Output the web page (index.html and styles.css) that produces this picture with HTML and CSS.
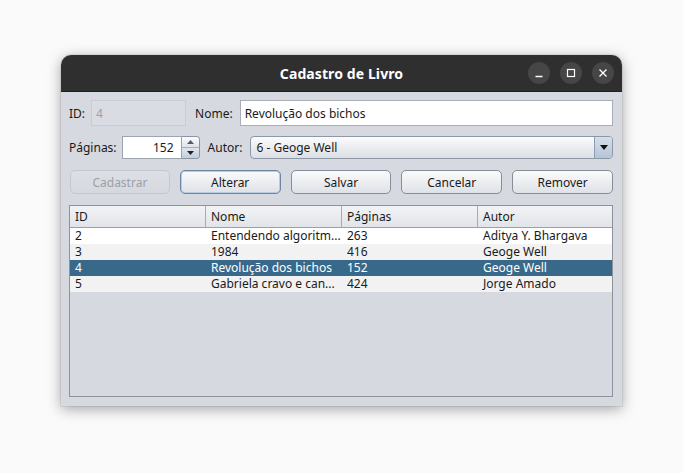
FILE: index.html
```html
<!DOCTYPE html>
<html lang="pt">
<head>
<meta charset="utf-8">
<title>Cadastro de Livro</title>
<link rel="stylesheet" href="styles.css">
</head>
<body>
<div class="window">
  <div class="titlebar">
    <div class="title">Cadastro de Livro</div>
    <div class="controls">
      <span class="ctl"><svg width="10" height="10" viewBox="0 0 10 10"><path d="M1.5 8.5h7" stroke="#fff" stroke-width="1.3"/></svg></span>
      <span class="ctl"><svg width="10" height="10" viewBox="0 0 10 10"><rect x="1.5" y="1.5" width="7" height="7" fill="none" stroke="#fff" stroke-width="1.2"/></svg></span>
      <span class="ctl"><svg width="10" height="10" viewBox="0 0 10 10"><path d="M1.5 1.5l7 7M8.5 1.5l-7 7" stroke="#fff" stroke-width="1.3"/></svg></span>
    </div>
  </div>
  <div class="content">
    <div class="row row1">
      <span class="lbl">ID:</span>
      <div class="field field-id">4</div>
      <span class="lbl lbl-nome">Nome:</span>
      <div class="field field-nome">Revolução dos bichos</div>
    </div>
    <div class="row row2">
      <span class="lbl">Páginas:</span>
      <div class="spinner">
        <div class="field field-pag">152</div>
        <div class="spin-btns">
          <span class="spin up"><svg width="7" height="4" viewBox="0 0 7 4"><path d="M0 4L3.5 0L7 4z" fill="#555b66"/></svg></span>
          <span class="spin down"><svg width="7" height="4" viewBox="0 0 7 4"><path d="M0 0L3.5 4L7 0z" fill="#222"/></svg></span>
        </div>
      </div>
      <span class="lbl lbl-autor">Autor:</span>
      <div class="combo">
        <span class="combo-text">6 - Geoge Well</span>
        <span class="combo-arrow"><svg width="8" height="5" viewBox="0 0 8 5"><path d="M0 0L4 5L8 0z" fill="#111"/></svg></span>
      </div>
    </div>
    <div class="row buttons">
      <button class="btn disabled">Cadastrar</button>
      <button class="btn focused">Alterar</button>
      <button class="btn">Salvar</button>
      <button class="btn">Cancelar</button>
      <button class="btn">Remover</button>
    </div>
    <div class="table">
      <div class="thead">
        <div class="th">ID</div>
        <div class="th">Nome</div>
        <div class="th">Páginas</div>
        <div class="th last">Autor</div>
      </div>
      <div class="tr">
        <div class="td">2</div><div class="td">Entendendo algoritm...</div><div class="td">263</div><div class="td">Aditya Y. Bhargava</div>
      </div>
      <div class="tr alt">
        <div class="td">3</div><div class="td">1984</div><div class="td">416</div><div class="td">Geoge Well</div>
      </div>
      <div class="tr sel">
        <div class="td">4</div><div class="td">Revolução dos bichos</div><div class="td">152</div><div class="td">Geoge Well</div>
      </div>
      <div class="tr alt">
        <div class="td">5</div><div class="td">Gabriela cravo e can...</div><div class="td">424</div><div class="td">Jorge Amado</div>
      </div>
    </div>
  </div>
</div>
</body>
</html>
```
FILE: styles.css
```css
html, body {
  margin: 0;
  padding: 0;
}
body {
  background: #fafafa;
  width: 683px;
  height: 473px;
  padding: 55px 0 0 61px;
  box-sizing: border-box;
  font-family: "Noto Sans", "DejaVu Sans", sans-serif;
  font-size: 12px;
  color: #1a1a1a;
}
.window {
  width: 561px;
  height: 351px;
  display: flex;
  flex-direction: column;
  border-radius: 10px 10px 0 0;
  box-shadow: 0 3px 14px rgba(0,0,0,0.35), 0 0 0 1px rgba(0,0,0,0.06);
  overflow: hidden;
}
.titlebar {
  height: 36px;
  background: #2f2f2f;
  display: flex;
  align-items: center;
  justify-content: center;
  position: relative;
  border-bottom: 1px solid #1f1f1f;
}
.title {
  color: #ffffff;
  font-weight: bold;
  font-size: 14px;
  letter-spacing: 0.1px;
}
.controls {
  position: absolute;
  right: 8px;
  top: 7px;
  display: flex;
  gap: 10px;
}
.ctl {
  width: 22px;
  height: 22px;
  border-radius: 50%;
  background: #464646;
  display: flex;
  align-items: center;
  justify-content: center;
}
.content {
  flex: 1;
  background: #d6d9df;
  padding: 8px 9px 9px 8px;
  display: flex;
  flex-direction: column;
}
.row {
  display: flex;
  align-items: center;
}
.row1 {
  height: 26px;
}
.row2 {
  height: 23px;
  margin-top: 10px;
}
.lbl {
  color: #1a1a1a;
  white-space: nowrap;
}
.field {
  height: 100%;
  box-sizing: border-box;
  background: #fff;
  border: 1px solid #b4b9c0;
  display: flex;
  align-items: center;
  padding: 0 4px;
}
.field-id {
  width: 95px;
  margin-left: 6px;
  background: #d9dce2;
  border-color: #c9ccd2;
  color: #9da2a9;
}
.lbl-nome {
  margin-left: 9px;
}
.field-nome {
  flex: 1;
  margin-left: 7px;
  border-color: #a9aeb6;
}
.spinner {
  display: flex;
  height: 23px;
  margin-left: 5px;
}
.field-pag {
  width: 60px;
  justify-content: flex-end;
  padding-right: 7px;
  border-color: #9ea4ad;
}
.spin-btns {
  width: 18px;
  display: flex;
  flex-direction: column;
  border: 1px solid #8a96a6;
  border-left: none;
  border-radius: 0 4px 4px 0;
  overflow: hidden;
  box-sizing: border-box;
}
.spin {
  flex: 1;
  display: flex;
  align-items: center;
  justify-content: center;
  background: linear-gradient(#fbfcfd, #dfe3e9);
}
.spin.down {
  border-top: 1px solid #a3adbb;
  background: linear-gradient(#dfe5ee, #c3cedc);
}
.lbl-autor {
  margin-left: 8px;
}
.combo {
  flex: 1;
  height: 23px;
  margin-left: 8px;
  box-sizing: border-box;
  border: 1px solid #8e97a4;
  border-radius: 4px;
  background: linear-gradient(#fcfcfd, #e9ebef 55%, #dcdfe4);
  display: flex;
  align-items: center;
  overflow: hidden;
}
.combo-text {
  flex: 1;
  padding-left: 5px;
}
.combo-arrow {
  width: 17px;
  height: 100%;
  border-left: 1px solid #8e9caf;
  background: linear-gradient(#d5dfea, #b4c5d8);
  display: flex;
  align-items: center;
  justify-content: center;
}
.buttons {
  margin-top: 11px;
  height: 24px;
  gap: 10px;
  padding-left: 1px;
}
.btn {
  width: 101px;
  height: 24px;
  box-sizing: border-box;
  font-family: "Noto Sans", "DejaVu Sans", sans-serif;
  font-size: 12px;
  color: #1a1a1a;
  border: 1px solid #878d96;
  border-radius: 5px;
  background: linear-gradient(#fbfbfc, #eceef1 50%, #dee1e6);
  padding: 0;
}
.btn.disabled {
  width: 100px;
  color: #9ca1a8;
  border-color: #c4c8ce;
  background: linear-gradient(#dcdfe4, #d5d8de);
}
.btn.focused {
  border-color: #6d86a5;
  box-shadow: inset 0 0 0 1px #b9cbe0;
}
.table {
  flex: 1;
  margin-top: 11px;
  border: 1px solid #8d929b;
  background: #d6d9df;
  display: flex;
  flex-direction: column;
}
.thead {
  display: grid;
  grid-template-columns: 136px 136px 136px 1fr;
  height: 21px;
  background: linear-gradient(#f2f3f5, #e1e4e9);
  border-bottom: 1px solid #9ba1aa;
}
.th {
  display: flex;
  align-items: center;
  padding-left: 5px;
  border-right: 1px solid #a7adb5;
}
.th.last {
  border-right: none;
}
.tr {
  display: grid;
  grid-template-columns: 136px 136px 136px 1fr;
  height: 16px;
  background: #ffffff;
  line-height: 16px;
}
.tr.alt {
  background: #f2f2f2;
}
.tr.sel {
  background: #39698a;
  color: #ffffff;
}
.td {
  padding-left: 5px;
  white-space: nowrap;
  overflow: hidden;
}
```
